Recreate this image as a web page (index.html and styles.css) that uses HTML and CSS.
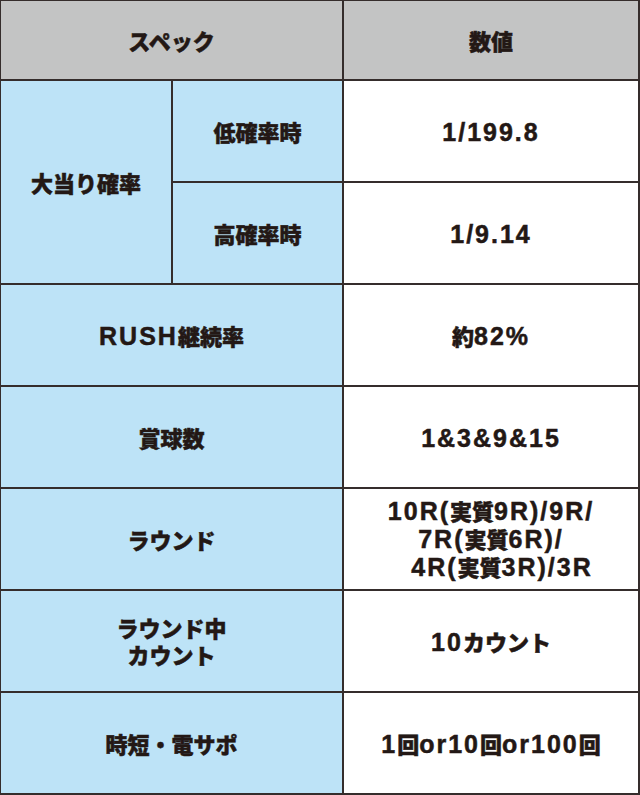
FILE: index.html
```html
<!DOCTYPE html>
<html lang="ja">
<head>
<meta charset="utf-8">
<title>スペック</title>
<link rel="stylesheet" href="styles.css">
</head>
<body>
<div class="spec">
  <div class="cell head span2"><div class="t">スペック</div></div>
  <div class="cell head"><div class="t">数値</div></div>

  <div class="cell label rows2"><div class="t">大当り確率</div></div>
  <div class="cell label"><div class="t">低確率時</div></div>
  <div class="cell value"><div class="t"><span class="n">1/199.8</span></div></div>
  <div class="cell label"><div class="t">高確率時</div></div>
  <div class="cell value"><div class="t"><span class="n">1/9.14</span></div></div>

  <div class="cell label span2"><div class="t"><span class="n">RUSH</span>継続率</div></div>
  <div class="cell value"><div class="t">約<span class="n">82%</span></div></div>

  <div class="cell label span2"><div class="t">賞球数</div></div>
  <div class="cell value"><div class="t"><span class="n">1&amp;3&amp;9&amp;15</span></div></div>

  <div class="cell label span2"><div class="t">ラウンド</div></div>
  <div class="cell value"><div class="t multi"><span class="n">10R(</span>実質<span class="n">9R)/9R/</span><br><span class="n">7R(</span>実質<span class="n">6R)/</span><br><span class="indent"><span class="n">4R(</span>実質<span class="n">3R)/3R</span></span></div></div>

  <div class="cell label span2"><div class="t multi">ラウンド中<br>カウント</div></div>
  <div class="cell value"><div class="t"><span class="n">10</span>カウント</div></div>

  <div class="cell label span2"><div class="t">時短・電サポ</div></div>
  <div class="cell value"><div class="t"><span class="n">1</span>回<span class="n">or10</span>回<span class="n">or100</span>回</div></div>
</div>
</body>
</html>
```

FILE: styles.css
```css
html, body {
  margin: 0;
  padding: 0;
  background: #ffffff;
}

.spec {
  box-sizing: border-box;
  width: 640px;
  height: 795px;
  display: grid;
  grid-template-columns: 170px 169px minmax(0, 1fr);
  grid-template-rows: 78px repeat(7, 100px);
  gap: 2px;
  padding: 1px 2px 2px 1px;
  background: #352d2c;
  font-family: "Noto Sans CJK JP", "Liberation Sans", sans-serif;
  font-weight: 900;
  font-size: 22px;
  color: #231815;
  -webkit-text-stroke: 0.5px #231815;
}

.cell {
  display: flex;
  align-items: center;
  justify-content: center;
  min-width: 0;
}

.t {
  text-align: center;
  line-height: 28px;
  white-space: nowrap;
}

.head {
  background: #c3c4c4;
}

.label {
  background: #bde3f7;
}

.value {
  background: #ffffff;
}

.span2 {
  grid-column: span 2;
}

.rows2 {
  grid-row: span 2;
}

.n {
  font-family: "Liberation Sans", "Noto Sans CJK JP", sans-serif;
  font-weight: 700;
  font-size: 25px;
  letter-spacing: 2px;
}

.multi {
  line-height: 27px;
}

.indent {
  padding-left: 22px;
}
```
